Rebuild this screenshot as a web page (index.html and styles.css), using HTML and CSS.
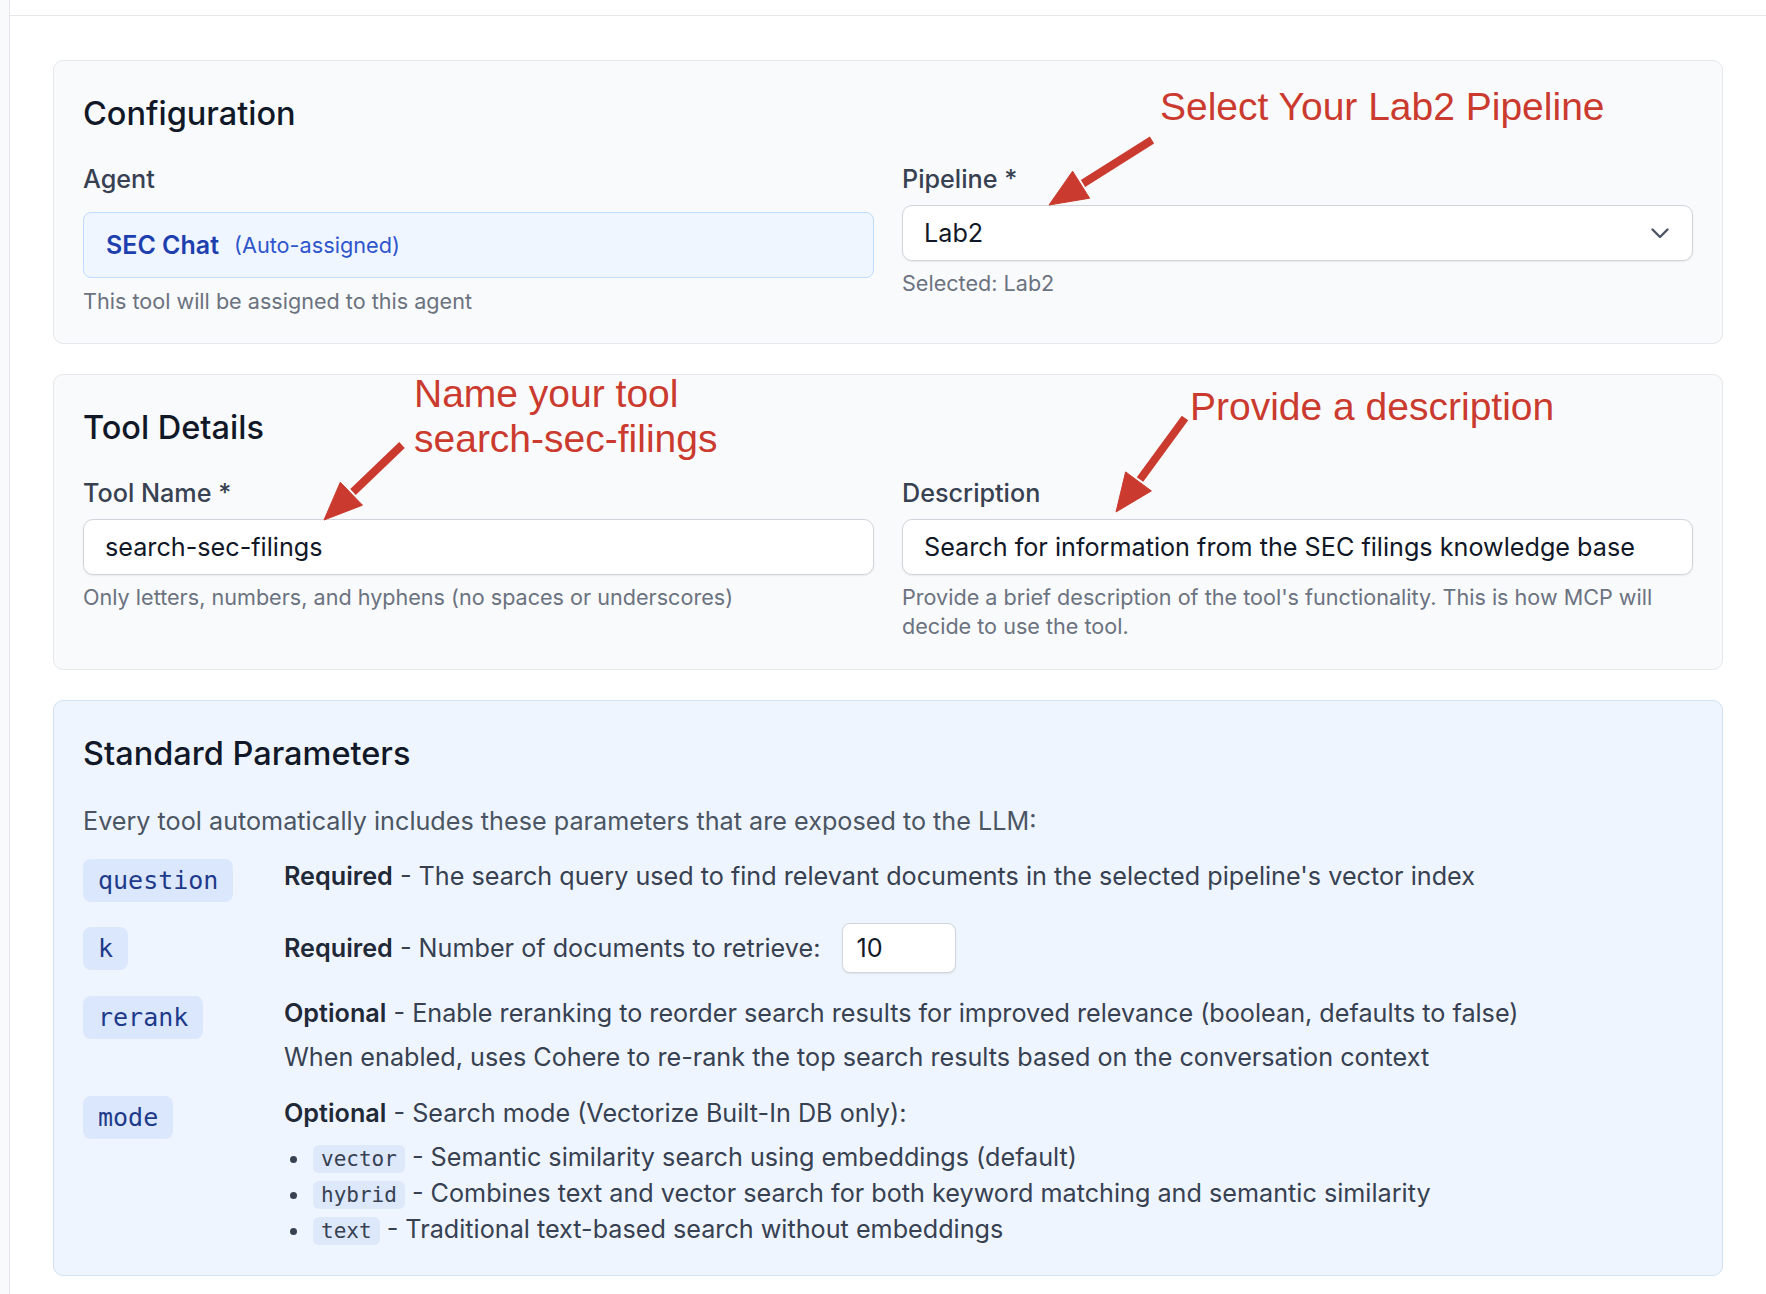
FILE: index.html
```html
<!DOCTYPE html>
<html lang="en">
<head>
<meta charset="utf-8">
<title>Create Tool</title>
<link rel="stylesheet" href="styles.css">
</head>
<body>
<div class="shell">
  <aside class="rail"></aside>
  <main class="main">
    <div class="topbar"></div>
    <div class="content">
      <section class="card">
        <h2 class="card-title">Configuration</h2>
        <div class="two-col">
          <div class="field">
            <div class="label label-agent">Agent</div>
            <div class="agent-box">
              <span class="agent-name">SEC Chat</span>
              <span class="agent-tag">(Auto-assigned)</span>
            </div>
            <p class="help help-agent">This tool will be assigned to this agent</p>
          </div>
          <div class="field">
            <div class="label">Pipeline *</div>
            <div class="select">
              <span class="select-value">Lab2</span>
              <svg class="chevron" width="18" height="11" viewBox="0 0 18 11"><polyline points="1.5,1.5 9,9 16.5,1.5" fill="none" stroke="#4b5563" stroke-width="2.4" stroke-linecap="round" stroke-linejoin="round"/></svg>
            </div>
            <p class="help">Selected: Lab2</p>
          </div>
        </div>
      </section>

      <section class="card card-tools">
        <h2 class="card-title">Tool Details</h2>
        <div class="two-col">
          <div class="field">
            <div class="label">Tool Name *</div>
            <div class="input">search-sec-filings</div>
            <p class="help">Only letters, numbers, and hyphens (no spaces or underscores)</p>
          </div>
          <div class="field">
            <div class="label">Description</div>
            <div class="input">Search for information from the SEC filings knowledge base</div>
            <p class="help">Provide a brief description of the tool's functionality. This is how MCP will decide to use the tool.</p>
          </div>
        </div>
      </section>

      <section class="card card-blue">
        <h2 class="card-title">Standard Parameters</h2>
        <p class="intro">Every tool automatically includes these parameters that are exposed to the LLM:</p>
        <div class="params">
          <div class="param">
            <div class="param-key"><span class="pill">question</span></div>
            <div class="param-desc"><strong>Required</strong> - The search query used to find relevant documents in the selected pipeline's vector index</div>
          </div>
          <div class="param param-center">
            <div class="param-key"><span class="pill">k</span></div>
            <div class="param-desc param-inline"><span><strong>Required</strong> - Number of documents to retrieve:</span><span class="num-input">10</span></div>
          </div>
          <div class="param param-rerank">
            <div class="param-key"><span class="pill">rerank</span></div>
            <div class="param-desc">
              <div><strong>Optional</strong> - Enable reranking to reorder search results for improved relevance (boolean, defaults to false)</div>
              <div class="subnote">When enabled, uses Cohere to re-rank the top search results based on the conversation context</div>
            </div>
          </div>
          <div class="param param-last">
            <div class="param-key"><span class="pill">mode</span></div>
            <div class="param-desc">
              <div><strong>Optional</strong> - Search mode (Vectorize Built-In DB only):</div>
              <ul class="modes">
                <li><code>vector</code> - Semantic similarity search using embeddings (default)</li>
                <li><code>hybrid</code> - Combines text and vector search for both keyword matching and semantic similarity</li>
                <li><code>text</code> - Traditional text-based search without embeddings</li>
              </ul>
            </div>
          </div>
        </div>
      </section>
    </div>
  </main>
</div>

<div class="note note-pipeline">Select Your Lab2 Pipeline</div>
<div class="note note-name">Name your tool<br>search-sec-filings</div>
<div class="note note-desc">Provide a description</div>

<svg class="arrows" width="1766" height="1294" viewBox="0 0 1766 1294">
  <g fill="#cb3a2e" stroke="#cb3a2e">
    <line x1="1152" y1="140" x2="1083" y2="183.5" stroke-width="8"/>
    <polygon points="1049,205 1089.6,198.2 1072.6,171.2" stroke-width="1" stroke-linejoin="round"/>
    <line x1="402" y1="445" x2="353" y2="492" stroke-width="8"/>
    <polygon points="324,520 362.5,505.2 340.3,482.2" stroke-width="1" stroke-linejoin="round"/>
    <line x1="1185" y1="418" x2="1140" y2="479.5" stroke-width="8"/>
    <polygon points="1116,512 1151.4,490.9 1125.6,471.9" stroke-width="1" stroke-linejoin="round"/>
  </g>
</svg>
</body>
</html>
```

FILE: styles.css
```css
* { box-sizing: border-box; }

body {
  margin: 0;
  background: #ffffff;
  font-family: Inter, "Noto Sans", sans-serif;
  color: #111827;
  position: relative;
}

.shell {
  display: flex;
  min-height: 1294px;
}

.rail {
  flex: none;
  width: 10px;
  background: #f9fafb;
  border-right: 1px solid #e5e7eb;
}

.main {
  flex: 1;
  min-width: 0;
}

.topbar {
  height: 16px;
  border-bottom: 1px solid #e5e7eb;
}

.content {
  padding: 44px 43px 0 43px;
  display: flex;
  flex-direction: column;
  gap: 30px;
}

.card {
  background: #f9fafb;
  border: 1px solid #e5e7eb;
  border-radius: 10px;
  padding: 29px 29px 27px 29px;
}

.card-tools {
  padding-bottom: 29px;
}

.card-blue {
  background: #eff5fe;
  border-color: #d3e1f5;
  padding-bottom: 28px;
}

.card-title {
  margin: 5px 0 32px 0;
  font-size: 32.5px;
  line-height: 38px;
  font-weight: 500;
  color: #111827;
}

.two-col {
  display: grid;
  grid-template-columns: 1fr 1fr;
  column-gap: 28px;
}

.label {
  font-size: 25.2px;
  line-height: 29px;
  font-weight: 500;
  color: #374151;
  margin-bottom: 11px;
}

.label-agent {
  margin-bottom: 18px;
}

.agent-box {
  height: 66px;
  display: flex;
  align-items: center;
  gap: 15px;
  padding: 0 22px;
  background: #eff6ff;
  border: 1px solid #bfdbfe;
  border-radius: 8px;
}

.agent-name {
  font-size: 25px;
  font-weight: 600;
  color: #1e40af;
}

.agent-tag {
  font-size: 21.7px;
  color: #2f55cc;
}

.help {
  margin: 8px 0 0 0;
  font-size: 21.6px;
  line-height: 28.8px;
  color: #6b7280;
}

.help-agent {
  margin-top: 9px;
}

.select,
.input {
  height: 56px;
  display: flex;
  align-items: center;
  background: #ffffff;
  border: 1px solid #d1d5db;
  border-radius: 10px;
  box-shadow: 0 1px 2px rgba(0, 0, 0, 0.07);
  font-size: 25.2px;
  color: #111827;
}

.select {
  justify-content: space-between;
  padding: 0 23px 0 21px;
}

.input {
  padding: 0 21px;
  white-space: nowrap;
  overflow: hidden;
}

.chevron {
  display: block;
}

.intro {
  margin: 0;
  font-size: 25.2px;
  line-height: 32px;
  color: #4b5563;
}

.params {
  margin-top: 22px;
  display: flex;
  flex-direction: column;
  gap: 21px;
}

.param {
  display: grid;
  grid-template-columns: 170px 1fr;
  column-gap: 31px;
  align-items: start;
}

.param-center {
  align-items: center;
}

.param-rerank {
  margin-top: 2px;
}

.param-last {
  margin-top: 2px;
}

.pill {
  display: inline-block;
  font-family: "DejaVu Sans Mono", "Liberation Mono", monospace;
  font-size: 25px;
  line-height: 33px;
  padding: 5px 15px;
  background: #dbe7fc;
  color: #1e3a8a;
  border-radius: 8px;
}

.param-desc {
  font-size: 25.2px;
  line-height: 32px;
  color: #374151;
  padding-top: 1px;
}

.param-desc strong {
  font-weight: 600;
  color: #1f2937;
}

.param-inline {
  display: flex;
  align-items: center;
  gap: 22px;
  padding-top: 0;
}

.num-input {
  width: 114px;
  height: 50px;
  display: flex;
  align-items: center;
  padding: 0 13px;
  background: #ffffff;
  border: 1px solid #d1d5db;
  border-radius: 8px;
  box-shadow: 0 1px 2px rgba(0, 0, 0, 0.07);
  color: #111827;
}

.subnote {
  margin-top: 12px;
}

.modes {
  list-style: none;
  margin: 10px 0 0 0;
  padding: 0;
}

.modes li {
  line-height: 36px;
  height: 36px;
}

.modes li::before {
  content: "";
  display: inline-block;
  width: 7px;
  height: 7px;
  border-radius: 50%;
  background: #374151;
  margin: 0 16px 0 6px;
  vertical-align: middle;
}

.modes code {
  font-family: "DejaVu Sans Mono", "Liberation Mono", monospace;
  font-size: 21px;
  line-height: 1;
  padding: 2px 8px;
  background: #dde8fb;
  color: #374151;
  border-radius: 6px;
}

/* screenshot annotations laid over the form */
.note {
  position: absolute;
  font-family: "Liberation Sans", Arial, sans-serif;
  font-size: 39px;
  line-height: 46px;
  color: #cb3a2e;
  white-space: nowrap;
}

.note-pipeline { left: 1160px; top: 84px; }
.note-name { left: 414px; top: 371px; line-height: 45px; }
.note-desc { left: 1190px; top: 384px; }

.arrows {
  position: absolute;
  left: 0;
  top: 0;
  pointer-events: none;
}
```
